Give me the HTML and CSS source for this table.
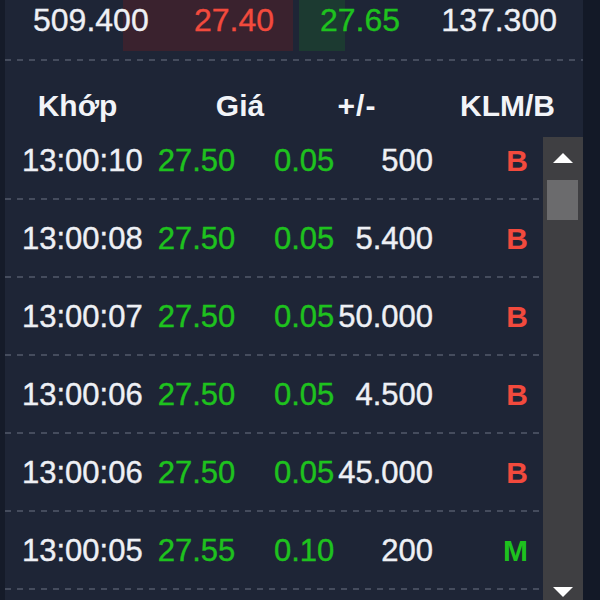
FILE: index.html
```html
<!DOCTYPE html>
<html lang="vi">
<head>
<meta charset="utf-8">
<title>Khớp lệnh</title>
<link rel="stylesheet" href="styles.css">
</head>
<body>
<div class="app">
  <div class="edge-left"></div>
  <div class="panel">
    <div class="quote">
      <div class="half bid" style="--bar:170px"><span>509.400</span><span class="red">27.40</span></div>
      <div class="half ask" style="--bar:46px"><span class="green">27.65</span><span>137.300</span></div>
    </div>
    <div class="dash"></div>
    <div class="head">
      <span class="h-time">Khớp</span>
      <span class="h-price">Giá</span>
      <span class="h-chg">+/-</span>
      <span class="h-vol">KLM/B</span>
    </div>
    <div class="list">
      <div class="rows">
        <div class="row"><span class="time">13:00:10</span><span class="price green">27.50</span><span class="chg green">0.05</span><span class="vol">500</span><span class="side red">B</span></div>
        <div class="row"><span class="time">13:00:08</span><span class="price green">27.50</span><span class="chg green">0.05</span><span class="vol">5.400</span><span class="side red">B</span></div>
        <div class="row"><span class="time">13:00:07</span><span class="price green">27.50</span><span class="chg green">0.05</span><span class="vol">50.000</span><span class="side red">B</span></div>
        <div class="row"><span class="time">13:00:06</span><span class="price green">27.50</span><span class="chg green">0.05</span><span class="vol">4.500</span><span class="side red">B</span></div>
        <div class="row"><span class="time">13:00:06</span><span class="price green">27.50</span><span class="chg green">0.05</span><span class="vol">45.000</span><span class="side red">B</span></div>
        <div class="row"><span class="time">13:00:05</span><span class="price green">27.55</span><span class="chg green">0.10</span><span class="vol">200</span><span class="side green">M</span></div>
      </div>
      <div class="scrollbar">
        <div class="sb-btn sb-up"><svg width="20" height="10" viewBox="0 0 20 10"><polygon points="10,0 20,10 0,10" fill="#ffffff"/></svg></div>
        <div class="sb-thumb"></div>
        <div class="sb-track"></div>
        <div class="sb-btn sb-down"><svg width="20" height="10" viewBox="0 0 20 10"><polygon points="0,0 20,0 10,10" fill="#ffffff"/></svg></div>
      </div>
    </div>
  </div>
  <div class="edge-right"></div>
</div>
</body>
</html>
```
FILE: styles.css
```css
html, body {
  margin: 0;
  padding: 0;
  background: #1e2536;
}
body {
  width: 600px;
  height: 600px;
  overflow: hidden;
  font-family: "Liberation Sans", Arial, sans-serif;
  color: #eef0f5;
}
.app {
  display: flex;
  width: 600px;
  height: 600px;
}
.edge-left {
  width: 5px;
  background: #151b29;
}
.edge-right {
  width: 17px;
  background: #131927;
}
.panel {
  flex: 1;
  display: flex;
  flex-direction: column;
  min-width: 0;
  background: #1e2536;
}
.quote {
  display: grid;
  grid-template-columns: 1fr 1fr;
  height: 51px;
}
.half {
  display: flex;
  justify-content: space-between;
  align-items: flex-start;
  padding-top: 4px;
  font-size: 32px;
  line-height: 32px;
  -webkit-text-stroke: 0.35px currentColor;
  background-repeat: no-repeat;
  background-size: var(--bar) 100%;
}
.bid {
  padding-left: 28px;
  padding-right: 20px;
  background-image: linear-gradient(#3a222e, #3a222e);
  background-position: right 1px top;
}
.ask {
  padding-left: 26px;
  padding-right: 26px;
  background-image: linear-gradient(#1c3a31, #1c3a31);
  background-position: left 5px top;
}
.red { color: #f24a3d; }
.green { color: #1ec21e; }
.dash {
  margin-top: 8px;
  height: 2px;
  background: repeating-linear-gradient(to right, #454c5d 0 6px, transparent 6px 12px);
}
.head {
  display: grid;
  grid-template-columns: 145px 180px 54px 1fr;
  margin-top: 30px;
  margin-bottom: 1px;
  font-size: 30px;
  line-height: 30px;
  font-weight: 700;
  color: #f2f4f8;
}
.h-time, .h-price, .h-chg { text-align: center; }
.h-chg { letter-spacing: 1px; }
.h-vol { text-align: right; padding-right: 28px; }
.list {
  flex: 1;
  display: flex;
  min-height: 0;
  overflow: hidden;
}
.rows {
  flex: 1;
  min-width: 0;
}
.row {
  display: flex;
  align-items: center;
  height: 76px;
  padding: 0 15px 2px 17px;
  font-size: 31px;
  line-height: 31px;
  -webkit-text-stroke: 0.4px currentColor;
  background: repeating-linear-gradient(to right, #454c5d 0 6px, transparent 6px 12px) left bottom / 100% 2px no-repeat;
}
.time { flex: none; }
.price { flex: none; margin-left: 15px; }
.chg { flex: none; width: 74px; margin-left: 25px; text-align: right; }
.vol { flex: 1; text-align: right; white-space: nowrap; }
.side {
  flex: none;
  width: 95px;
  text-align: right;
  font-weight: 700;
  font-size: 30px;
  -webkit-text-stroke: 0;
}
.scrollbar {
  width: 40px;
  margin-top: 15px;
  display: flex;
  flex-direction: column;
  background: #3f3f42;
}
.sb-btn {
  display: flex;
  justify-content: center;
  align-items: center;
  flex: none;
}
.sb-up { height: 42px; }
.sb-down { height: 16px; }
.sb-btn svg { display: block; }
.sb-thumb {
  height: 40px;
  margin: 1px 5px 0 4px;
  background: #6b6b6d;
}
.sb-track { flex: 1; }
```
